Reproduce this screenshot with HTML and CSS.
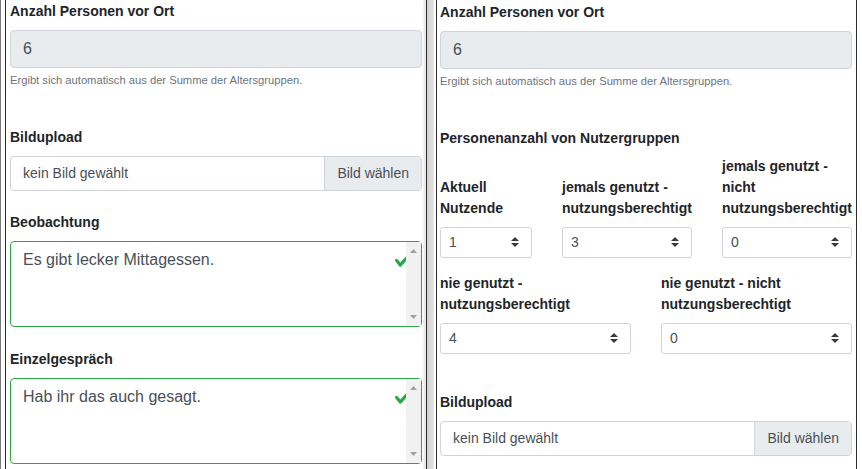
FILE: index.html
```html
<!DOCTYPE html>
<html lang="de">
<head>
<meta charset="utf-8">
<title>Formular</title>
<link rel="stylesheet" href="styles.css">
</head>
<body>
<div class="edge"></div>
<section class="panel panel-left">
  <div class="group group-help">
    <label class="lbl">Anzahl Personen vor Ort</label>
    <div class="input input-disabled">6</div>
    <small class="help">Ergibt sich automatisch aus der Summe der Altersgruppen.</small>
  </div>
  <div class="group group-file">
    <label class="lbl">Bildupload</label>
    <div class="file"><span class="file-name">kein Bild gewählt</span><span class="file-btn">Bild wählen</span></div>
  </div>
  <div class="group group-text">
    <label class="lbl">Beobachtung</label>
    <div class="ta-wrap">
      <textarea class="ta" rows="3">Es gibt lecker Mittagessen.</textarea>
      <svg class="check" width="12" height="18" viewBox="0 0 5.333 8"><path fill="#28a745" d="M2.3 6.73L.6 4.53c-.4-1.04.46-1.4 1.1-.8l1.1 1.4 3.4-3.8c.6-.63 1.6-.27 1.2.7l-4 4.6c-.43.5-.8.4-1.1.1z"/></svg>
      <div class="sb">
        <svg width="7" height="4" viewBox="0 0 7 4"><path fill="#a3a3a3" d="M3.5 0L7 4H0z"/></svg>
        <svg width="7" height="4" viewBox="0 0 7 4"><path fill="#a3a3a3" d="M0 0h7L3.5 4z"/></svg>
      </div>
    </div>
  </div>
  <div class="group group-text">
    <label class="lbl">Einzelgespräch</label>
    <div class="ta-wrap">
      <textarea class="ta" rows="3">Hab ihr das auch gesagt.</textarea>
      <svg class="check" width="12" height="18" viewBox="0 0 5.333 8"><path fill="#28a745" d="M2.3 6.73L.6 4.53c-.4-1.04.46-1.4 1.1-.8l1.1 1.4 3.4-3.8c.6-.63 1.6-.27 1.2.7l-4 4.6c-.43.5-.8.4-1.1.1z"/></svg>
      <div class="sb">
        <svg width="7" height="4" viewBox="0 0 7 4"><path fill="#a3a3a3" d="M3.5 0L7 4H0z"/></svg>
        <svg width="7" height="4" viewBox="0 0 7 4"><path fill="#a3a3a3" d="M0 0h7L3.5 4z"/></svg>
      </div>
    </div>
  </div>
</section>
<div class="gap"></div>
<section class="panel panel-right">
  <div class="group group-help">
    <label class="lbl">Anzahl Personen vor Ort</label>
    <div class="input input-disabled">6</div>
    <small class="help">Ergibt sich automatisch aus der Summe der Altersgruppen.</small>
  </div>
  <div class="group">
    <label class="lbl lbl-users">Personenanzahl von Nutzergruppen</label>
    <div class="cols cols-1">
      <div class="col col-a">
        <label class="lbl">Aktuell Nutzende</label>
        <div class="sel"><span>1</span><svg width="8" height="10" viewBox="0 0 4 5"><path fill="#343a40" d="M2 0L0 2h4zm0 5L0 3h4z"/></svg></div>
      </div>
      <div class="col col-b">
        <label class="lbl">jemals genutzt - nutzungsberechtigt</label>
        <div class="sel"><span>3</span><svg width="8" height="10" viewBox="0 0 4 5"><path fill="#343a40" d="M2 0L0 2h4zm0 5L0 3h4z"/></svg></div>
      </div>
      <div class="col col-b">
        <label class="lbl">jemals genutzt - nicht nutzungsberechtigt</label>
        <div class="sel"><span>0</span><svg width="8" height="10" viewBox="0 0 4 5"><path fill="#343a40" d="M2 0L0 2h4zm0 5L0 3h4z"/></svg></div>
      </div>
    </div>
    <div class="cols cols-2">
      <div class="col col-half">
        <label class="lbl">nie genutzt - nutzungsberechtigt</label>
        <div class="sel"><span>4</span><svg width="8" height="10" viewBox="0 0 4 5"><path fill="#343a40" d="M2 0L0 2h4zm0 5L0 3h4z"/></svg></div>
      </div>
      <div class="col col-half">
        <label class="lbl">nie genutzt - nicht nutzungsberechtigt</label>
        <div class="sel"><span>0</span><svg width="8" height="10" viewBox="0 0 4 5"><path fill="#343a40" d="M2 0L0 2h4zm0 5L0 3h4z"/></svg></div>
      </div>
    </div>
  </div>
  <div class="group group-file">
    <label class="lbl">Bildupload</label>
    <div class="file"><span class="file-name">kein Bild gewählt</span><span class="file-btn">Bild wählen</span></div>
  </div>
</section>
<div class="edge-right"></div>
</body>
</html>
```

FILE: styles.css
```css
* { box-sizing: border-box; }
html, body { margin: 0; height: 469px; overflow: hidden; }
body {
  display: flex;
  font-family: "Liberation Sans", Arial, sans-serif;
  font-size: 14px;
  line-height: 1.5;
  color: #212529;
  background: #fff;
}
.edge { width: 5px; flex: none; border-left: 1px solid #7a7a7a; }
.edge-right { width: 5px; flex: none; }
.panel {
  flex: none;
  height: 469px;
  overflow: hidden;
  border-left: 1px solid #2b2b2b;
  border-right: 1px solid #2b2b2b;
}
.panel-left {
  width: 422px;
  padding: 1px 4px 0 4px;
  box-shadow: inset -4px 0 3px -2px rgba(0, 0, 0, 0.12);
}
.panel-right {
  width: 421px;
  padding: 2px 4px 0 3px;
}
.gap {
  width: 9px;
  flex: none;
  background: linear-gradient(to right, #cfcfcf, #e4e4e4 75%, #fff 80%);
}
.lbl { display: block; font-weight: bold; margin-bottom: 8px; }
.lbl-users { margin-bottom: 7px; }
.group-help { margin-bottom: 38px; }
.group-file { margin-bottom: 21px; }
.group-text { margin-bottom: 22px; }
.input {
  height: 38px;
  padding: 6px 12px;
  font-size: 16px;
  line-height: 24px;
  border: 1px solid #ced4da;
  border-radius: 4px;
  color: #495057;
}
.input-disabled { background: #e9ecef; }
.help {
  display: block;
  margin-top: 4px;
  font-size: 80%;
  color: #6c757d;
}
.file {
  display: flex;
  height: 35px;
  border: 1px solid #ced4da;
  border-radius: 4px;
  color: #495057;
  overflow: hidden;
}
.file-name { flex: 1; padding: 6px 12px; }
.file-btn {
  padding: 6px 12px;
  background: #e9ecef;
  border-left: 1px solid #ced4da;
}
.ta-wrap { position: relative; }
.ta {
  display: block;
  width: 100%;
  height: 86px;
  margin: 0;
  padding: 6px 27px 6px 12px;
  font-family: "Liberation Sans", Arial, sans-serif;
  font-size: 16px;
  line-height: 1.5;
  color: #495057;
  border: 1px solid #28a745;
  border-radius: 4px;
  resize: none;
  overflow: hidden;
  outline: none;
}
.check { position: absolute; top: 10px; right: 16px; }
.sb {
  position: absolute;
  top: 1px;
  right: 1px;
  bottom: 1px;
  width: 15px;
  padding: 7px 0;
  background: #f1f1f1;
  display: flex;
  flex-direction: column;
  justify-content: space-between;
  align-items: center;
}
.sb svg { display: block; }
.cols { display: flex; gap: 30px; align-items: flex-end; }
.cols-1 { margin-bottom: 15px; }
.cols-2 { margin-bottom: 38px; }
.col { display: flex; flex-direction: column; justify-content: flex-end; }
.col-a { width: 92px; }
.col-b { width: 130px; }
.col-half { flex: 1; }
.sel {
  display: flex;
  align-items: center;
  justify-content: space-between;
  height: 31px;
  padding: 4px 12px 4px 8px;
  border: 1px solid #ced4da;
  border-radius: 3px;
  color: #495057;
}
.sel svg { display: block; }
```
